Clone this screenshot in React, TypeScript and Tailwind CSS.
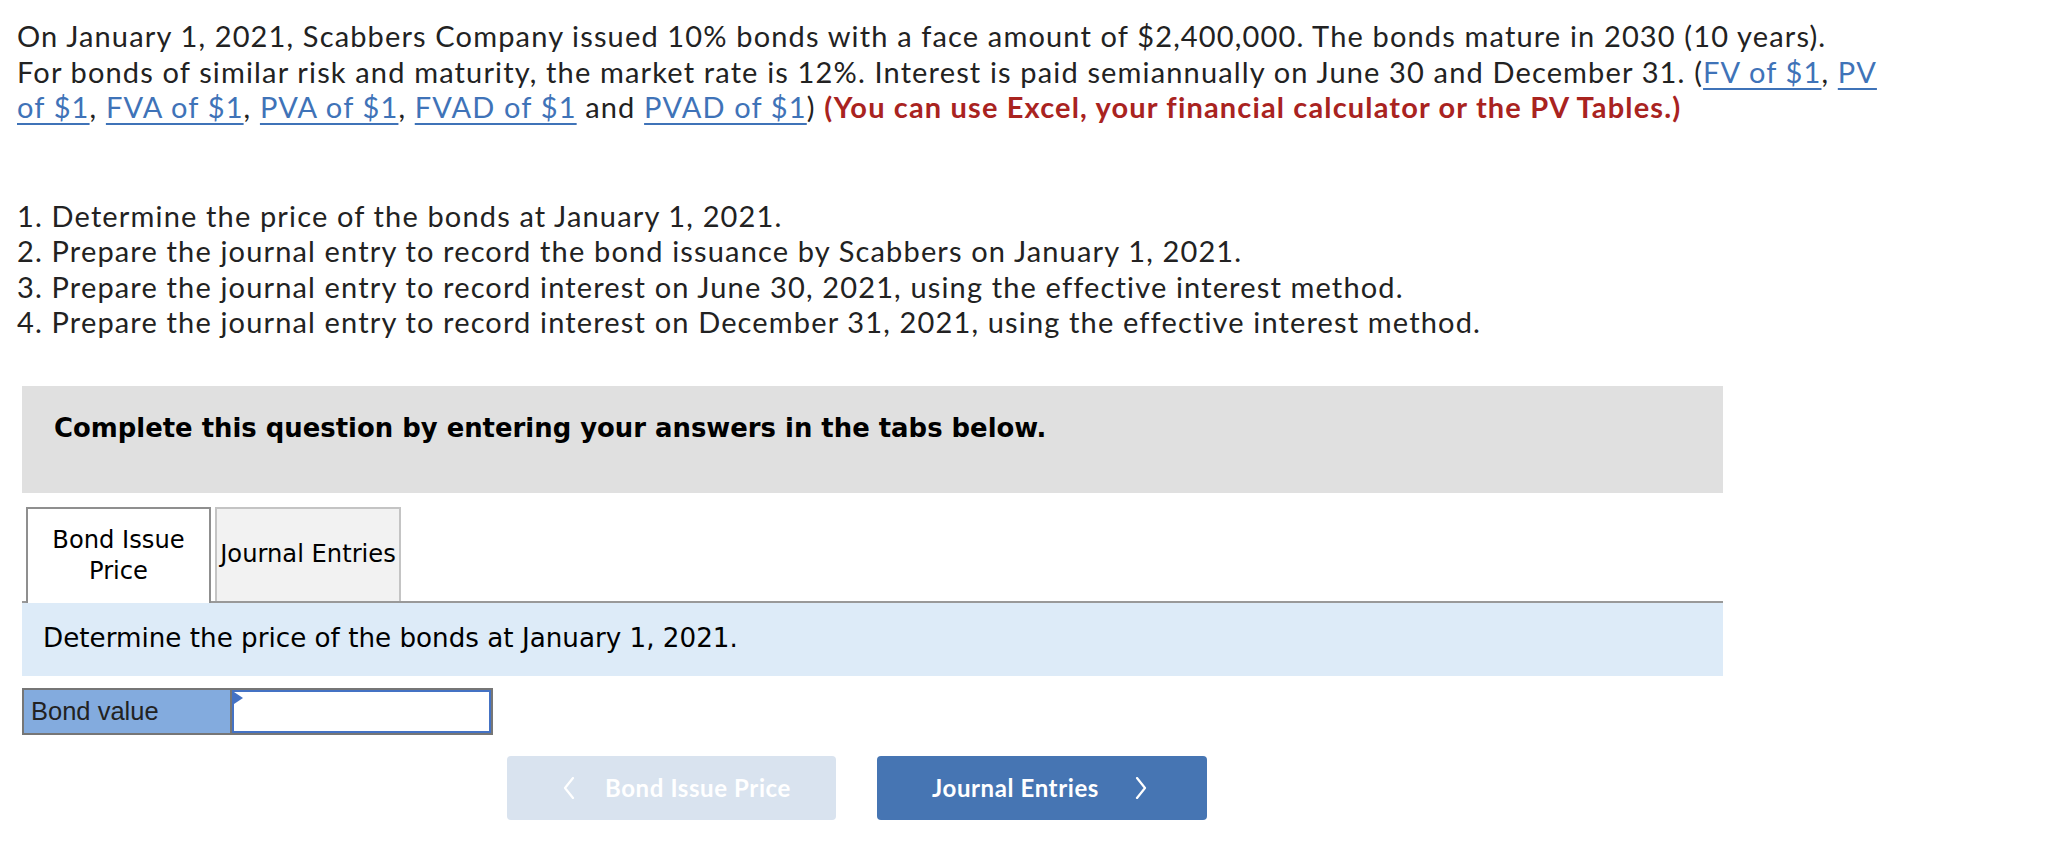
import React from "react";

function Link({ children }: { children: React.ReactNode }) {
  return (
    <a className="text-[#3f73b8] underline decoration-[2px] underline-offset-[5px] cursor-pointer">
      {children}
    </a>
  );
}

function Chevron({ dir }: { dir: "left" | "right" }) {
  return (
    <svg width="12" height="22" viewBox="0 0 12 22" fill="none" className="shrink-0">
      <polyline
        points={dir === "left" ? "10,1 2,11 10,21" : "2,1 10,11 2,21"}
        stroke="white"
        strokeWidth="2.2"
        strokeLinecap="round"
        strokeLinejoin="round"
      />
    </svg>
  );
}

export default function App() {
  return (
    <div className="w-[2050px] h-[858px] bg-white overflow-hidden">
      {/* question text */}
      <div className="pl-[17px] pt-[18px] font-['Lato',sans-serif] text-[29px] leading-[35.5px] tracking-[1.15px] text-[#222]">
        <p>
          On January 1, 2021, Scabbers Company issued 10% bonds with a face amount of $2,400,000. The bonds mature in 2030 (10 years).
          <br />
          For bonds of similar risk and maturity, the market rate is 12%. Interest is paid semiannually on June 30 and December 31. (
          <Link>FV of $1</Link>, <Link>PV</Link>
          <br />
          <Link>of $1</Link>, <Link>FVA of $1</Link>, <Link>PVA of $1</Link>, <Link>FVAD of $1</Link> and{" "}
          <Link>PVAD of $1</Link>){" "}
          <strong className="text-[#a9231f] font-bold">
            (You can use Excel, your financial calculator or the PV Tables.)
          </strong>
        </p>

        <div className="mt-[73px]">
          <div>1. Determine the price of the bonds at January 1, 2021.</div>
          <div>2. Prepare the journal entry to record the bond issuance by Scabbers on January 1, 2021.</div>
          <div>3. Prepare the journal entry to record interest on June 30, 2021, using the effective interest method.</div>
          <div>4. Prepare the journal entry to record interest on December 31, 2021, using the effective interest method.</div>
        </div>
      </div>

      {/* instructions box */}
      <div className="ml-[22px] mt-[46px] w-[1701px] h-[107px] bg-[#e0e0e0] pl-[32px] pt-[27px] leading-[30px] font-['DejaVu_Sans',sans-serif]">
        <span className="font-bold text-[25.9px] text-black">
          Complete this question by entering your answers in the tabs below.
        </span>
      </div>

      {/* tabs */}
      <div className="ml-[22px] mt-[14px] w-[1701px] flex items-end border-b-2 border-[#999] font-['DejaVu_Sans',sans-serif] text-[24.2px] text-black">
        <div className="ml-[4px] w-[185px] h-[96px] -mb-[2px] bg-white border-2 border-b-0 border-[#8f8f8f] flex items-center justify-center text-center leading-[31px]">
          <span>
            Bond Issue
            <br />
            Price
          </span>
        </div>
        <div className="ml-[4px] w-[186px] h-[94px] bg-[#f2f2f2] border-2 border-b-0 border-[#c4c4c4] flex items-center justify-center">
          <span className="whitespace-nowrap">Journal Entries</span>
        </div>
      </div>

      <div className="ml-[22px] w-[1701px] h-[73px] bg-[#ddebf8] flex items-center pl-[21px] font-['DejaVu_Sans',sans-serif] text-[26.2px] text-black">
        Determine the price of the bonds at January 1, 2021.
      </div>

      {/* bond value row */}
      <div className="ml-[22px] mt-[12px] w-[471px] h-[47px] flex border-2 border-[#767676] font-['Liberation_Sans',sans-serif] text-[25.5px] text-[#222]">
        <div className="w-[208px] bg-[#83abde] flex items-center pl-[7px] border-r-2 border-[#767676]">
          Bond value
        </div>
        <div className="flex-1 relative border-2 border-[#4472c4] bg-white">
          <div className="absolute left-0 top-0 w-0 h-0 border-t-[6px] border-b-[6px] border-l-[9px] border-t-transparent border-b-transparent border-l-[#4472c4]" />
        </div>
      </div>

      {/* nav buttons */}
      <div className="ml-[507px] mt-[21px] flex gap-[41px] font-['Lato',sans-serif] font-bold text-[24px] tracking-[0.6px] text-white">
        <button className="w-[329px] h-[64px] rounded-[4px] bg-[#d9e3ef] flex items-center pl-[56px]">
          <Chevron dir="left" />
          <span className="ml-[30px]">Bond Issue Price</span>
        </button>
        <button className="w-[330px] h-[64px] rounded-[4px] bg-[#4675b3] flex items-center pl-[55px]">
          <span>Journal Entries</span>
          <span className="ml-[36px] flex">
            <Chevron dir="right" />
          </span>
        </button>
      </div>
    </div>
  );
}
